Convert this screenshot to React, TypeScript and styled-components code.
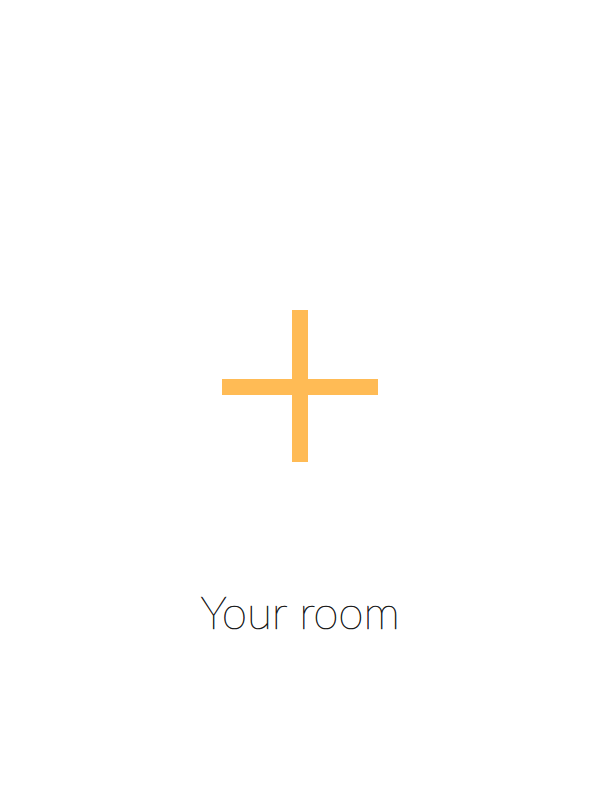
import React from "react";
import styled, { createGlobalStyle } from "styled-components";

const Global = createGlobalStyle`
  html, body { margin: 0; padding: 0; background: #ffffff; }
`;

const Page = styled.div`
  width: 600px;
  height: 800px;
  display: flex;
  flex-direction: column;
  align-items: center;
  padding-top: 310px;
  box-sizing: border-box;
`;

const PlusIcon = styled.svg`
  display: block;
  width: 156px;
  height: 152px;
`;

const Label = styled.div`
  margin-top: 124px;
  font-family: Lato, "Open Sans", sans-serif;
  font-weight: 100;
  font-size: 46px;
  line-height: 52px;
  color: #1a1a1a;
  -webkit-text-stroke: 0.6px #1a1a1a;
  letter-spacing: -0.2px;
`;

export default function App() {
  return (
    <>
      <Global />
      <Page>
        <PlusIcon viewBox="0 0 156 152" aria-hidden="true">
          <rect x="70" y="0" width="16" height="152" fill="#FFBB55" />
          <rect x="0" y="69" width="156" height="16" fill="#FFBB55" />
        </PlusIcon>
        <Label>Your room</Label>
      </Page>
    </>
  );
}
